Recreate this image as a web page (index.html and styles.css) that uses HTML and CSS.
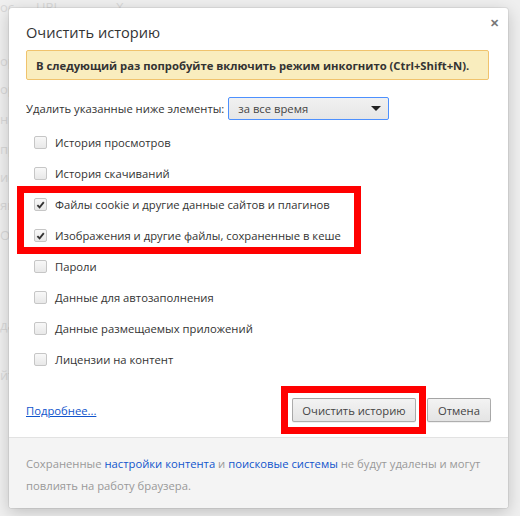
FILE: index.html
```html
<!DOCTYPE html>
<html lang="ru">
<head>
<meta charset="utf-8">
<title>Очистить историю</title>
<link rel="stylesheet" href="styles.css">
</head>
<body>
<div class="backdrop">
  <span class="bg-t" style="left:0px;top:-2px">ос</span>
  <span class="bg-t" style="left:36px;top:-2px">URL</span>
  <span class="bg-t" style="left:116px;top:-2px">Х</span>
  <span class="bg-t" style="left:0px;top:52px">ор</span>
  <span class="bg-t" style="left:0px;top:80px">ор</span>
  <span class="bg-t" style="left:0px;top:110px">н</span>
  <span class="bg-t" style="left:0px;top:140px">пр</span>
  <span class="bg-t" style="left:0px;top:168px">ис</span>
  <span class="bg-t" style="left:0px;top:196px">яц</span>
  <span class="bg-t" style="left:0px;top:226px">О'</span>
  <span class="bg-t" style="left:0px;top:316px">да</span>
  <span class="bg-t" style="left:0px;top:366px">йт</span>
</div>
<div class="dialog">
  <div class="dlg-body">
    <div class="title-row">
      <h1 class="title">Очистить историю</h1>
      <span class="close">&#x2715;</span>
    </div>
    <div class="banner">В следующий раз попробуйте включить режим инкогнито (Ctrl+Shift+N).</div>
    <div class="period-row">
      <span class="period-label">Удалить указанные ниже элементы:</span>
      <div class="select">
        <span>за все время</span>
        <span class="arrow"></span>
      </div>
    </div>
    <ul class="checks">
      <li class="row"><span class="cb"></span><span>История просмотров</span></li>
      <li class="row"><span class="cb"></span><span>История скачиваний</span></li>
      <li class="row"><span class="cb checked"><svg viewBox="0 0 12 12" width="12" height="12"><path d="M2.6 6.2 L5 8.6 L9.6 2.8" fill="none" stroke="#333" stroke-width="2"/></svg></span><span>Файлы cookie и другие данные сайтов и плагинов</span></li>
      <li class="row"><span class="cb checked"><svg viewBox="0 0 12 12" width="12" height="12"><path d="M2.6 6.2 L5 8.6 L9.6 2.8" fill="none" stroke="#333" stroke-width="2"/></svg></span><span>Изображения и другие файлы, сохраненные в кеше</span></li>
      <li class="row"><span class="cb"></span><span>Пароли</span></li>
      <li class="row"><span class="cb"></span><span>Данные для автозаполнения</span></li>
      <li class="row"><span class="cb"></span><span>Данные размещаемых приложений</span></li>
      <li class="row"><span class="cb"></span><span>Лицензии на контент</span></li>
    </ul>
    <div class="actions">
      <a class="more" href="#">Подробнее...</a>
      <div class="buttons">
        <button class="btn btn-main">Очистить историю</button>
        <button class="btn btn-cancel">Отмена</button>
      </div>
    </div>
  </div>
  <div class="footer">
    Сохраненные <a href="#">настройки контента</a> и <a href="#">поисковые системы</a> не будут удалены и могут повлиять на работу браузера.
  </div>
</div>
<div class="mark mark-1"></div>
<div class="mark mark-2"></div>
</body>
</html>
```

FILE: styles.css
```css
* { box-sizing: border-box; }
html, body { margin: 0; padding: 0; }
body {
  width: 520px;
  height: 516px;
  background: #efefef;
  font-family: "Open Sans", "Noto Sans", sans-serif;
  font-size: 11.25px;
  color: #333;
  position: relative;
  overflow: hidden;
  padding: 8px 0 0 9px;
}
.backdrop { position: absolute; inset: 0; }
.bg-t { position: absolute; color: #d8d8d8; font-size: 13px; }

.dialog {
  position: relative;
  width: 499px;
  height: 500px;
  background: #fff;
  border-radius: 3px;
  box-shadow: 0 4px 16px rgba(0,0,0,0.2), 0 0 0 1px rgba(0,0,0,0.06);
  display: flex;
  flex-direction: column;
  overflow: hidden;
}
.dlg-body {
  flex: 1;
  padding: 14px 19px 0 17px;
  display: flex;
  flex-direction: column;
}
.title-row { height: 20px; }
.title {
  margin: 0;
  font-size: 14.6px;
  font-weight: normal;
  line-height: 20px;
  color: #333;
}
.close {
  position: absolute;
  right: 9px;
  top: 7px;
  font-size: 11px;
  font-weight: bold;
  color: #777;
}
.banner {
  margin-top: 8px;
  height: 30px;
  background: #f9edbe;
  border: 1px solid #f0c36d;
  border-radius: 2px;
  padding: 0 9px;
  display: flex;
  align-items: center;
  font-weight: 700;
  color: #333;
  white-space: nowrap;
}
.period-row {
  margin-top: 17px;
  display: flex;
  align-items: center;
  gap: 4px;
  height: 23px;
}
.select {
  width: 161px;
  height: 23px;
  border: 1px solid #4d90fe;
  border-radius: 2px;
  background: linear-gradient(#f1f1f1, #e6e6e6);
  display: flex;
  align-items: center;
  justify-content: space-between;
  padding: 0 7px 0 9px;
  color: #444;
}
.arrow {
  width: 0; height: 0;
  border-left: 5px solid transparent;
  border-right: 5px solid transparent;
  border-top: 5px solid #222;
}
.checks {
  list-style: none;
  margin: 7px 0 0 0;
  padding: 0 0 0 8px;
}
.row {
  height: 31px;
  display: flex;
  align-items: center;
  gap: 8px;
  color: #333;
}
.cb {
  width: 13px;
  height: 13px;
  border: 1px solid #c6c6c6;
  border-radius: 2px;
  background: linear-gradient(#f8f8f8, #e8e8e8);
  display: flex;
  align-items: center;
  justify-content: center;
  flex: none;
}
.cb svg { display: block; }
.actions {
  margin-top: 23px;
  display: flex;
  align-items: center;
  justify-content: space-between;
}
.more { color: #15c; text-decoration: underline; }
.buttons { display: flex; gap: 11px; margin-right: -2px; }
.btn {
  font-family: inherit;
  font-size: 11.25px;
  color: #444;
  height: 24px;
  border: 1px solid rgba(0,0,0,0.28);
  border-radius: 2px;
  background: linear-gradient(#f3f3f3, #e4e4e4);
  padding: 0;
  box-shadow: 0 1px 0 rgba(0,0,0,0.06);
}
.btn-main { width: 124px; }
.btn-cancel { width: 64px; }
.footer {
  height: 71px;
  border-top: 1px solid #e2e2e2;
  background: #f4f4f4;
  padding: 15px 19px 0 17px;
  line-height: 22px;
  color: #999;
}
.footer a { color: #15c; text-decoration: none; }
.mark {
  position: absolute;
  border: 7px solid #f00;
}
.mark-1 { left: 17px; top: 186px; width: 344px; height: 68px; }
.mark-2 { left: 281px; top: 386px; width: 145px; height: 48px; }
```
